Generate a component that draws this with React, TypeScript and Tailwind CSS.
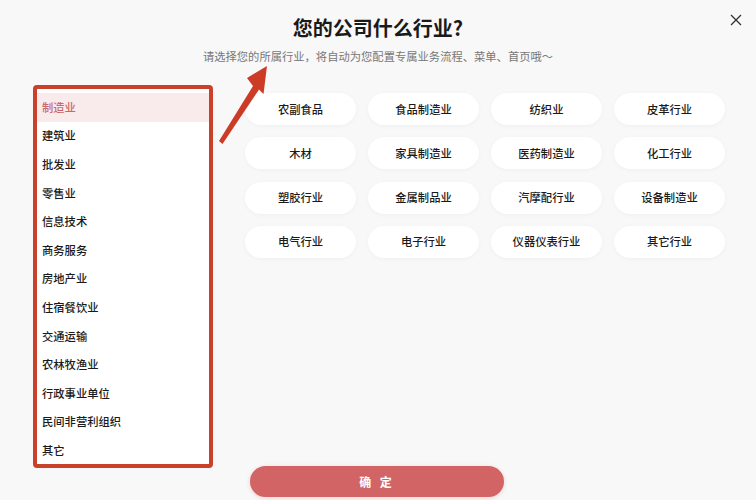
import React from "react";

const left = ["制造业","建筑业","批发业","零售业","信息技术","商务服务","房地产业","住宿餐饮业","交通运输","农林牧渔业","行政事业单位","民间非营利组织","其它"];
const right = ["农副食品","食品制造业","纺织业","皮革行业","木材","家具制造业","医药制造业","化工行业","塑胶行业","金属制品业","汽摩配行业","设备制造业","电气行业","电子行业","仪器仪表行业","其它行业"];

export default function App() {
  return (
    <div className="relative w-[756px] h-[500px] overflow-hidden bg-[#f8f8f8] text-[#222]" style={{ fontFamily: '"Noto Sans CJK SC", "Noto Sans", sans-serif' }}>
      <div className="flex flex-col items-center">
        <div className="mt-[14px] h-[28px] leading-[28px] text-[20px] font-bold text-[#1a1a1a]">您的公司什么行业?</div>
        <div className="mt-[6px] h-[16px] leading-[16px] text-[11.3px] text-[#777]">请选择您的所属行业，将自动为您配置专属业务流程、菜单、首页哦～</div>
      </div>
      <div className="flex mt-[25px] pl-[37px]">
        <div className="relative w-[172px] h-[375px] bg-white pt-[4px]">
          <div className="h-full overflow-hidden">
            {left.map((t, i) => (
              <div key={t} className={`h-[28.6px] flex items-center pl-[5px] text-[11.3px] font-medium ${i === 0 ? "bg-[#f9ebeb] text-[#c8686c]" : "text-[#1a1a1a]"}`}>{t}</div>
            ))}
          </div>
          <div className="absolute -inset-[4px] border-[4px] border-[#c9402b] rounded-[4px] pointer-events-none"></div>
        </div>
        <div className="ml-[36px] mt-[4px] grid grid-cols-[111px_111px_111px_111px] gap-x-[12px] gap-y-[12.3px] content-start">
          {right.map((t) => (
            <div key={t} className="h-[32px] rounded-full bg-white shadow-[0_1px_4px_rgba(0,0,0,0.04)] flex items-center justify-center text-[11.3px] font-medium text-[#1a1a1a]">{t}</div>
          ))}
        </div>
      </div>
      <div className="flex justify-center mt-[2px] pr-[2px]">
        <button className="w-[254px] h-[31px] rounded-full bg-[#d26466] text-white text-[12px] font-bold tracking-[3px] shadow-[0_1px_4px_rgba(210,100,102,0.25)]">确 定</button>
      </div>
      <svg className="absolute inset-0 pointer-events-none" width="756" height="500" viewBox="0 0 756 500">
        <polygon points="267,66 247,78 253,86 219,141 222.5,144 259,89.5 263.5,94" fill="#cc3b25" />
        <path d="M731 15 L741 25 M741 15 L731 25" stroke="#333" strokeWidth="1.3" fill="none" />
      </svg>
    </div>
  );
}
